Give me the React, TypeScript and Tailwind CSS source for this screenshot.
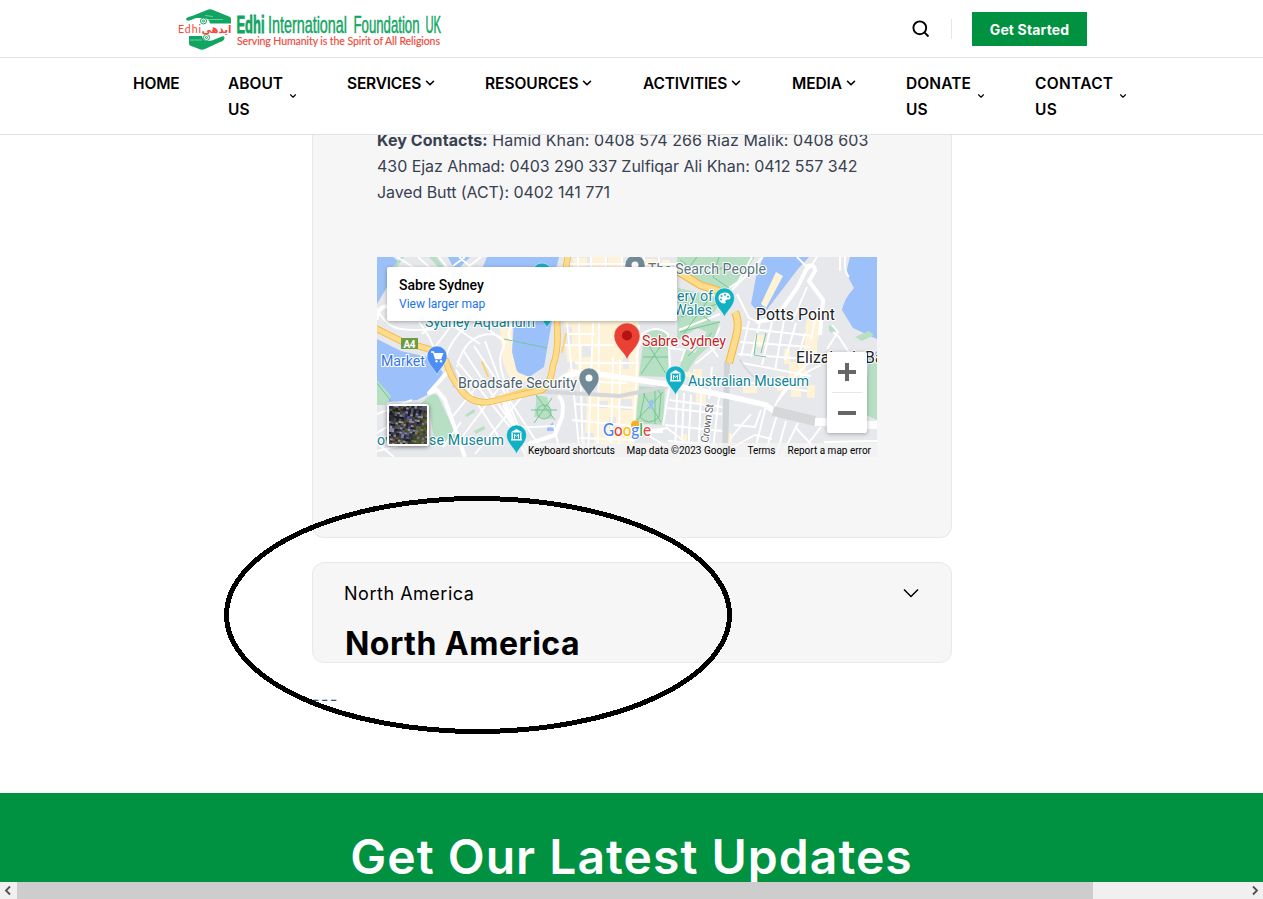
import { ChevronDown } from "lucide-react";

const navItems = [
  { label: "HOME", width: "w-[95px]", track: "tracking-[-0.15px]", menu: false },
  { label: "ABOUT US", width: "w-[119px]", track: "tracking-[0px]", menu: true, wrap: true, text: "w-[58px]" },
  { label: "SERVICES", width: "w-[138px]", track: "tracking-[-0.2px]", menu: true },
  { label: "RESOURCES", width: "w-[158px]", track: "tracking-[-0.05px]", menu: true },
  { label: "ACTIVITIES", width: "w-[149px]", track: "tracking-[-0.2px]", menu: true },
  { label: "MEDIA", width: "w-[114px]", track: "tracking-[-0.1px]", menu: true },
  { label: "DONATE US", width: "w-[129px]", track: "tracking-[0.1px]", menu: true, wrap: true, text: "w-[68px]" },
  { label: "CONTACT US", width: "w-[100px]", track: "tracking-[0.3px]", menu: true, wrap: true, text: "w-[81px]" },
];

function Logo() {
  return (
    <svg width="266" height="44" viewBox="0 0 266 44" className="block">
      <g fill="#12a562">
        <path d="M8 11.500 Q10 9.500 14 9 L29 3 Q32 1.500 35 3 L51 9.500 Q53 10 53 12 V16.500 H32 Q31 11 25.500 11 H18 L13 13 Q8 15 8 11.500 Z" />
        <path d="M11 29 H24 Q25 34 29 34 L34 33.500 L44 29.500 Q47 28.500 46.500 31 Q46 34 42 35 L27 42 Q24 43.500 21 42 L12 38.500 Q11 38 11 36 Z" />
      </g>
      <g fill="none" stroke="#12a562" strokeWidth="1">
        <circle cx="25.500" cy="14" r="3" /><circle cx="25.500" cy="14" r="1" />
        <circle cx="28.500" cy="30.500" r="3" /><circle cx="28.500" cy="30.500" r="1" />
      </g>
      <g fill="none" stroke="#9bdcbd" strokeWidth=".7"><path d="M30 12.500 H45 M27 8.500 L35 9.500 M12 33 H24" /></g>
      <text x="0" y="26" fontSize="10.5" fill="#f0493a" textLength="23" fontFamily="Lato, sans-serif">Edhi</text>
      <text x="23.500" y="25.500" fontSize="11" fontWeight="700" fill="#f0493a" textLength="30" lengthAdjust="spacingAndGlyphs" fontFamily="'DejaVu Sans', sans-serif">ایدھی</text>
      <g transform="translate(58.500 26) scale(.5 1)" fill="#12a562" fontFamily="'Liberation Sans Narrow', 'Liberation Sans', sans-serif">
        <text x="0" y="0" fontSize="23" fontWeight="700" textLength="56" lengthAdjust="spacingAndGlyphs" stroke="#12a562" strokeWidth=".8">Edhi</text>
        <text x="63" y="0" fontSize="23" textLength="158" lengthAdjust="spacingAndGlyphs" stroke="#12a562" strokeWidth=".5">International</text>
        <text x="234" y="0" fontSize="23" textLength="132" lengthAdjust="spacingAndGlyphs" stroke="#12a562" strokeWidth=".5">Foundation</text>
        <text x="378" y="0" fontSize="23" textLength="31" lengthAdjust="spacingAndGlyphs" stroke="#12a562" strokeWidth=".5">UK</text>
      </g>
      <text x="59" y="37.500" fontSize="10.6" fill="#f0493a" stroke="#f0493a" strokeWidth=".15" textLength="203" fontFamily="Lato, sans-serif">Serving Humanity is the Spirit of All Religions</text>
    </svg>
  );
}

function Pin({ x, y, color, r = 10, tip = 19 }: { x: number; y: number; color: string; r?: number; tip?: number }) {
  return (
    <path
      transform={`translate(${x} ${y})`}
      d={`M0 ${tip} C-2 ${r + 3} ${-r} ${r * 0.8} ${-r} 0 A${r} ${r} 0 0 1 ${r} 0 C${r} ${r * 0.8} 2 ${r + 3} 0 ${tip} Z`}
      fill={color}
      stroke="#fff"
      strokeOpacity=".55"
      strokeWidth=".8"
    />
  );
}

function Museum({ x, y }: { x: number; y: number }) {
  return (
    <g transform={`translate(${x} ${y})`}>
      <path d="M-6 -2.500 L0 -6 L6 -2.500 Z M-5.500 4 H5.500 V5.500 H-5.500 Z M-5 -2 H-3.500 V5 H-5 Z M3.500 -2 H5 V5 H3.500 Z" fill="#fff" />
      <path d="M-2 3.500 V-.8 L0 1.500 L2 -.8 V3.500" stroke="#fff" strokeWidth="1" fill="none" />
    </g>
  );
}

const shades = ["#1b1930", "#3d3b5e", "#5c5a7b", "#1c2220", "#46482f", "#8784a0", "#2a2f5a", "#5b5f3c", "#9b9595", "#30291f"];
const tiles = Array.from({ length: 500 }, (_, i) => {
  const noise = Math.abs(Math.sin(i * 12.9898 + 4.1) * 43758.5453) % 1;
  return { x: (i % 20) * 2, y: Math.floor(i / 20) * 1.6, c: shades[Math.floor(noise * 10)] };
});

const gaps = [
  [205, 88, 10, 12], [185, 105, 15, 7], [216, 124, 6, 12], [196, 147, 9, 18], [232, 160, 7, 12], [243, 142, 12, 11], [221, 144, 10, 7], [208, 176, 9, 11], [246, 100, 6, 12], [185, 70, 10, 18],
];

const blocks = [
  [196, 1, 14, 9], [213, 0, 15, 10], [231, 0, 14, 10], [268, 2, 12, 8], [284, 3, 9, 7], [306, 115, 9, 5], [316, 112, 9, 8],
  [319, 134, 10, 12], [331, 121, 12, 8], [366, 129, 14, 7], [380, 78, 7, 12], [400, 119, 7, 15], [412, 105, 9, 15], [432, 72, 8, 24],
  [421, 98, 8, 21], [407, 92, 6, 15], [414, 126, 10, 14], [430, 128, 8, 13], [371, 187, 11, 9], [304, 177, 6, 9], [268, 188, 10, 8], [347, 176, 8, 10],
];

const streets = [
  "M0 52 Q9 70 24 72 T60 72", "M42 65 Q53 79 58 94", "M56 66 L45 77 M77 65 L58 90 M92 66 Q73 84 69 100",
  "M75 68 L103 87 M80 110 Q88 78 113 77 Q128 78 127 90 Q119 102 128 125 L133 143", "M106 68 L129 86 M139 66 Q126 76 136 85",
  "M80 104 L157 200 M86 93 L145 183 M97 89 L163 190 M108 84 Q121 120 146 181", "M79 113 L125 185",
  "M85 180 L125 127 M98 197 L147 137 M75 160 L107 121 M66 190 L84 165", "M126 148 L149 200 M135 171 L177 169 L184 200",
  "M192 116 Q220 111 253 123", "M190 66 L203 200 M202 66 L206 200 M216 66 L211 200 M222 66 L221 187 M236 100 L234 187 M243 103 L242 187 M262 68 L256 185",
  "M185 88 H238 M198 106 H262 M188 124 L250 126 M198 147 L258 151 M195 163 L257 169 M203 181 L258 183",
  "M201 0 V10 M214 0 V10 M229 0 V10 M245 0 V10 M267 0 V10 M282 0 V10 M190 7 H302", "M190 77 H218",
  "M259 102 L265 77 Q279 67 291 77 L294 120 L286 168 M293 91 L308 93 L304 104", "M300 136 L298 200 M307 136 L305 180 M314 138 L311 200 M325 120 L321 200 M335 110 L332 142 M342 140 L335 200",
  "M290 151 L345 157 M288 168 L345 174 M292 143 L345 150 M318 107 L338 91 M291 184 L340 188", "M302 73 L320 66 L343 57 M343 70 L334 90 L341 100",
  "M386 0 L365 23 L355 33 M375 0 L361 25 L350 32 M360 37 L372 61 L381 65 L398 62", "M372 64 L364 99 M383 66 L374 100 M395 65 L385 108 M407 63 L398 113 M419 66 L408 103 M428 76 L421 101",
  "M365 71 L436 79 M363 85 L434 90 M361 97 L430 102", "M456 75 L462 80 L471 94 M440 52 L434 83 M430 30 L415 65", "M420 0 L432 12 L440 0 M463 0 L463 14 M468 0 Q467 15 472 20",
  "M365 106 L434 119 M362 124 L430 134", "M397 151 Q408 126 436 102 M400 145 Q419 118 444 108 M389 149 L376 200 M401 155 L387 200",
  "M353 182 L374 157 M357 168 L378 170 L384 153 M356 190 L378 178 L395 182 M409 164 L399 200", "M419 171 L446 200 M444 170 L421 200 M447 185 L500 184 M462 192 L480 200 M404 200 L421 166",
  "M261 175 L290 171 L312 188 M270 178 Q292 190 305 200 M224 170 L235 187", "M455 68 L461 75 L450 92", "M20 0 L36 10 M62 0 L70 10 M82 0 L94 10 M104 0 L91 10 M41 0 L52 10 M76 9 L88 0",
  "M0 157 L35 143 M0 176 L10 170 M0 186 L17 200 M0 194 L26 188",
];

const freeway = "M-2 71 L30 87 Q59 91 69 104 Q73 120 84 133 Q94 147 112 145 L165 133 Q174 127 176 108 Q182 94 180 66 L191 -2";

function MapArt() {
  return (
    <svg width="500" height="200" viewBox="0 0 500 200" className="block" fontFamily="Roboto, sans-serif">
      <rect width="500" height="200" fill="#e6e8ec" />
      <g fill="#9cc0f9">
        <path d="M0 0 H16 L22 5 L14 14 L10 30 L0 47 Z" />
        <path d="M71 0 H93 L83 10 H76 Z M110 0 H182 L179 12 H105 Z" />
        <path d="M0 82 L24 94 L50 100 L66 115 L56 135 L40 143 L10 145 L0 125 Z" />
        <path d="M137 64 H175 L167 110 L155 118 L146 124 L138 110 L135 96 Z" />
        <path d="M386 0 H432 L421 12 L385 59 L374 47 L379 20 Z" />
        <path d="M473 0 H500 V82 L491 78 L476 71 L465 53 Q467 42 477 31 L469 16 Z" />
        <path d="M170 171 l6 -6 l1 9 l-7 0 Z M491 102 L500 94 V125 L495 131 Z" />
      </g>
      <g fill="#b7dfc4">
        <path d="M52 0 H59 L67 10 H61 Z M14 12 L24 0 H27 L20 10 Z M0 123 L14 139 L9 148 H0 Z" />
        <path d="M300 0 H378 L364 20 L350 35 L333 31 L300 19 Z M301 31 L336 39 L340 51 L331 64 L300 84 Z" />
        <path d="M302 64 H343 L336 86 L320 100 L308 118 L302 113 L308 92 L318 96 L330 75 Z" />
        <path d="M267 79 Q277 68 291 77 L291 120 L262 119 Z M262 129 L288 131 L286 168 L257 166 Z" />
        <path d="M43 148 Q57 131 62 141 L81 182 L76 187 L57 181 L51 148 Z" />
        <path d="M159 138 L170 140 L176 162 L157 160 L159 147 Z M88 158 l9 -6 1 3 -8 5 Z M97 174 l10 -5 1 3 -9 5 Z" />
        <path d="M491 110 L500 97 V163 L487 157 Z M478 80 l14 -6 5 4 -12 6 Z M452 68 l7 4 -2 5 -5 -3 Z" />
      </g>
      <g fill="#fef3d6">
        <path d="M399 15 L406 19 L389 51 L384 47 Z M123 71 L135 65 V95 L140 115 L155 121 L137 130 L126 106 Z" />
        <path d="M187 64 H262 V125 L257 187 H207 L211 130 L191 116 Z M429 66 L436 53 L445 66 L438 94 L427 98 Z" />
        {blocks.map(([x, y, w, h], i) => <rect key={i} x={x} y={y} width={w} height={h} />)}
      </g>
      <g fill="#e6e8ec">
        {gaps.map(([x, y, w, h], i) => <rect key={i} x={x} y={y} width={w} height={h} />)}
      </g>
      <g fill="none" stroke="#fff" strokeWidth="1.900" strokeLinejoin="round">
        {streets.map((d) => <path key={d} d={d} />)}
      </g>
      <g fill="none" stroke="#fff" strokeWidth="4" strokeLinejoin="round">
        <path d="M379 65 L398 62 L420 31 L431 9 Q438 7 438 14 L432 24 L446 43 L443 78 M74 111 L52 136 L60 133 L68 143 L88 200" />
        <path d="M124 137 L140 175 M181 139 Q188 143 185 160 L178 178 L151 187 M0 63 Q-1 51 10 49 M261 174 H286" />
      </g>
      <g fill="none" stroke="#79c591" strokeWidth="1">
        <path d="M303 3 L323 18 M320 0 L306 18 M342 0 L336 20 L352 31 M355 6 L330 18 M304 42 L333 64 M332 42 L305 79 M304 60 L340 47 M303 75 L343 65" />
        <path d="M311 99 L335 76 M268 82 L289 117 M290 80 L264 117 M266 100 H291 M264 133 L284 165 M286 135 L260 163 M278 131 V167 M268 135 Q278 127 284 137 L282 160 Q272 170 263 160 Z" />
        <circle cx="167" cy="155" r="7" /><path d="M159 138 L178 163 M175 141 L157 166 M154 153 H180 M0 126 L14 144 M127 82 L170 91 M380 76 L377 98 L389 100 M389 76 L384 96" />
      </g>
      <path d="M272 144 l4 -2 0 9 -4 1 Z" fill="#9cc0f9" />
      <g fill="none" strokeLinecap="round">
        <path d="M350 105 L348 200" stroke="#d1d4d7" strokeWidth="6" strokeLinecap="butt" />
        <path d="M363 103 Q373 120 385 125 M72 105 Q83 120 76 130" stroke="#d4d7da" strokeWidth="1.500" />
        <path d="M150 134 L194 136 L243 139 L292 129" stroke="#d5d7da" strokeWidth="4" strokeLinecap="butt" />
        <path d={freeway} stroke="#f4b73f" strokeWidth="6.500" />
        <path d={freeway} stroke="#fddc8c" strokeWidth="5" />
        <path d="M297 12 L323 28 L342 34 M358 55 Q363 65 359 80 L352 106" stroke="#f4b73f" strokeWidth="8" strokeLinecap="butt" />
        <path d="M297 12 L323 28 L342 34 M358 55 Q363 65 359 80 L352 106" stroke="#fddc8c" strokeWidth="6" strokeLinecap="butt" />
        <path d="M118 141 L190 120 M105 105 L111 119 M189 77 L185 95" stroke="#fbd174" strokeWidth="2" />
        <path d="M181 126 Q190 112 220 117 L289 127 L350 139 L389 148 L398 155" stroke="#fff" strokeWidth="5.500" />
        <path d="M396 154 L438 164" stroke="#d6d7d9" strokeWidth="10" strokeLinecap="butt" />
        <path d="M438 165 H453 M485 168 H500" stroke="#fff" strokeWidth="8" strokeLinecap="butt" />
      </g>

      <Pin x={165} y={16} color="#12b0c4" />
      <Pin x={170} y={52} color="#12b0c4" />
      <Pin x={258} y={8} color="#718a98" />
      <circle cx="258" cy="8" r="3.500" fill="#fff" />
      <Pin x={212} y={121} color="#718a98" />
      <circle cx="212" cy="121" r="3.500" fill="#fff" />
      <Pin x={60} y={99} color="#4c8df6" />
      <path d="M54 95 H56.500 L58.500 101.500 H64.500" fill="none" stroke="#fff" strokeWidth="1.300" /><path d="M57 96 H66.500 L64.500 101 H58.500 Z" fill="#fff" />
      <circle cx="59.500" cy="104.300" r="1.200" fill="#fff" /><circle cx="64" cy="104.300" r="1.200" fill="#fff" />
      <Pin x={347.500} y={41} color="#12b0c4" />
      <path d="M347.500 35.500 a6 5.500 0 1 0 0 11 q2 -.5 1 -2 q-.5 -2 2 -2 q3 0 3 -2 q0 -5 -6 -5 Z" fill="#fff" />
      <g fill="#12b0c4"><circle cx="344.500" cy="39" r="1" /><circle cx="348" cy="37.800" r="1" /><circle cx="351" cy="39.800" r="1" /><circle cx="344" cy="42.500" r="1" /></g>
      <Pin x={298.500} y={119} color="#12b0c4" /><Museum x={298.500} y={119} />
      <Pin x={139.500} y={178} color="#12b0c4" /><Museum x={139.500} y={178} />
      <Pin x={250} y={79} color="#e94235" r={13} tip={24} />
      <circle cx="250" cy="78.500" r="5" fill="#b31412" />
      <circle cx="258.500" cy="168" r="4.500" fill="#f6b117" />

      <g fontSize="14.200" fontWeight="400" stroke="#fff" strokeWidth="2.200" strokeLinejoin="round" paintOrder="stroke">
        <text x="271" y="17" fill="#5c7480" textLength="118">The Search People</text>
        <text x="48" y="70" fill="#0f8494" textLength="110">Sydney Aquarium</text>
        <text x="300" y="44" fill="#0f8494" textLength="36">ery of</text>
        <text x="297" y="58" fill="#0f8494" textLength="38">Wales</text>
        <text x="265" y="89" fill="#c5221f" textLength="84">Sabre Sydney</text>
        <text x="4" y="109" fill="#3477e0" textLength="44">Market</text>
        <text x="81" y="131" fill="#4c616d" textLength="119">Broadsafe Security</text>
        <text x="311" y="129" fill="#0f8494" textLength="121">Australian Museum</text>
        <text x="0" y="188" fill="#0f8494" textLength="127">ow rhouse Museum</text>
        <text x="379" y="63" fontSize="15.800" fill="#202124" textLength="79">Potts Point</text>
        <text x="419" y="106" fontSize="15.800" fill="#202124" textLength="95">Elizabeth Bay</text>
        <text transform="translate(331 186) rotate(-82)" fontSize="10.800" fill="#5f6368" textLength="39">Crown St</text>
      </g>
      <rect x="24" y="81" width="17" height="11" fill="#6c9c43" />
      <text x="26.500" y="90.500" fontSize="10" fontWeight="700" fill="#fff" textLength="12">A4</text>
      <g fontFamily="Lato, sans-serif" fontSize="17.500" fontWeight="500" stroke="#fff" strokeWidth="2" paintOrder="stroke">
        <text x="226" y="178.500" textLength="48" lengthAdjust="spacingAndGlyphs">
          <tspan fill="#4285f4">G</tspan><tspan fill="#ea4335">o</tspan><tspan fill="#fbbc04">o</tspan><tspan fill="#4285f4">g</tspan><tspan fill="#34a853">l</tspan><tspan fill="#ea4335">e</tspan>
        </text>
      </g>
      <rect x="147" y="186" width="353" height="14" fill="#f5f5f5" fillOpacity=".75" />
      <g fontSize="10" fill="#000">
        <text x="151" y="197" textLength="87">Keyboard shortcuts</text>
        <text x="249.500" y="197" textLength="109">Map data ©2023 Google</text>
        <text x="370.500" y="197" textLength="28">Terms</text>
        <text x="410.500" y="197" textLength="83.500">Report a map error</text>
      </g>
    </svg>
  );
}

function SatelliteThumb() {
  return (
    <svg width="38" height="38" viewBox="0 0 38 38" className="block">
      <rect width="38" height="38" fill="#333142" />
      <g transform="rotate(10 19 19) scale(1.300) translate(-5 -5)">
        {tiles.map((t, i) => <rect key={i} x={t.x} y={t.y} width="2.100" height="1.700" fill={t.c} />)}
      </g>
      <path d="M21 38 L28 20 L33 17 L38 0 V38 Z" fill="#5f6527" opacity=".45" />
    </svg>
  );
}

function MapCard() {
  return (
    <div className="relative h-[200px] w-[500px] overflow-hidden font-[Roboto,sans-serif]">
      <MapArt />
      <div className="absolute left-[10px] top-[10px] h-[54px] w-[290px] rounded-[2px] bg-white px-3 pt-[10px] shadow-[0_1px_4px_rgba(0,0,0,0.3)]">
        <div className="text-[14px] font-medium leading-4 text-black">Sabre Sydney</div>
        <div className="mt-[4px] text-[12px] leading-[14px] text-[#1a73e8]">View larger map</div>
      </div>
      <div className="absolute left-[10px] top-[147px] h-[42px] w-[42px] overflow-hidden rounded-[3px] border-2 border-white shadow-[0_1px_4px_rgba(0,0,0,0.5)]">
        <SatelliteThumb />
      </div>
      <div className="absolute left-[450px] top-[95px] flex h-[81px] w-[40px] flex-col items-center rounded-[2px] bg-white shadow-[0_1px_4px_rgba(0,0,0,0.3)]">
        <svg width="40" height="81" viewBox="0 0 40 81">
          <path d="M11 20 H29 M20 11 V29 M11 61 H29" stroke="#666" strokeWidth="4" />
          <path d="M5 40.500 H35" stroke="#e6e6e6" />
        </svg>
      </div>
    </div>
  );
}

export default function App() {
  return (
    <div className="relative flex h-[899px] w-full flex-col overflow-hidden bg-white font-[Inter,sans-serif]">
      <header className="flex h-[58px] shrink-0 items-start border-b border-[#e5e5e5] pl-[178px]">
        <div className="mt-[7px] w-[734px]"><Logo /></div>
        <svg width="18" height="18" viewBox="0 0 18 18" className="mt-[20px] block shrink-0">
          <path d="M12.200 12.200 L16.500 16.500 M14.200 7.800 A6.400 6.400 0 1 1 1.400 7.800 A6.400 6.400 0 0 1 14.200 7.800 Z" stroke="#000" strokeWidth="1.900" fill="none" />
        </svg>
        <div className="ml-[21px] mt-[19px] h-5 w-px bg-[#e3e5e8]" />
        <button className="ml-[20px] mt-3 h-[34px] w-[115px] whitespace-nowrap bg-[#009240] text-center text-[14px] font-bold tracking-[0.15px] text-white">Get Started</button>
      </header>

      <nav className="flex h-[77px] shrink-0 items-start border-b border-[#e2e3e5] pl-[133px] pt-[13px] text-[15.5px] font-semibold leading-[26px] text-black">
        {navItems.map((item) => (
          <a key={item.label} className={`flex shrink-0 items-center ${item.width} ${item.track}`}>
            <span className={item.wrap ? item.text : "whitespace-nowrap"}>{item.label}</span>
            {item.menu && (item.wrap
              ? <ChevronDown size={10} strokeWidth={2.6} className="ml-[2px] -mt-[2px] shrink-0" />
              : <ChevronDown size={14} strokeWidth={2.8} className="ml-[2px] -mt-[2px] shrink-0" />)}
          </a>
        ))}
      </nav>

      <main className="flex h-[658px] shrink-0 flex-col overflow-hidden pl-[312px]">
        <section className="-mt-[8px] h-[411px] w-[640px] shrink-0 rounded-b-xl border border-t-0 border-[#e8e8e8] bg-[#f6f6f6] pl-[64px]">
          <p className="whitespace-nowrap text-[16px] leading-[26px] text-[#374151]">
            <span className="block tracking-[0.07px]"><b className="font-bold">Key Contacts:</b> Hamid Khan: 0408 574 266 Riaz Malik: 0408 603</span>
            <span className="block tracking-[-0.04px]">430 Ejaz Ahmad: 0403 290 337 Zulfiqar Ali Khan: 0412 557 342</span>
            <span className="block tracking-[-0.08px]">Javed Butt (ACT): 0402 141 771</span>
          </p>
          <div className="mt-[52px]"><MapCard /></div>
        </section>
        <section className="mt-6 h-[101px] w-[640px] shrink-0 overflow-hidden rounded-xl border border-[#e8e8e8] bg-[#f6f6f6] pl-8 pr-8 text-black">
          <div className="mt-[16px] flex h-[28px] items-center justify-between">
            <span className="-ml-px text-[18px] tracking-[0.52px]">North America</span>
            <svg width="16" height="10" viewBox="0 0 16 10"><path d="M1 1.500 L8 8.500 L15 1.500" fill="none" stroke="#000" strokeWidth="1.500" /></svg>
          </div>
          <h2 className="mt-[17px] text-[32px] font-bold leading-[40px] tracking-[0.48px]">North America</h2>
        </section>
        <p className="mt-[23px] text-[16px] leading-[26px] tracking-[1.6px] text-[#3c4f7c]">---</p>
      </main>

      <section className="h-[89px] shrink-0 overflow-hidden bg-[#009240] pt-[34px] text-center">
        <h2 className="whitespace-nowrap text-[48px] font-semibold leading-[60px] tracking-[1.03px] text-white">Get Our Latest Updates</h2>
      </section>

      <div className="flex h-[17px] shrink-0 items-center justify-between bg-[#f0f0f0]">
        <svg width="17" height="17" viewBox="0 0 17 17"><path d="M10 4.500 L6 8.500 L10 12.500" fill="none" stroke="#505050" strokeWidth="1.800" /></svg>
        <div className="h-full w-[1076px] bg-[#cdcdcd]" />
        <div className="flex flex-1 justify-end">
          <svg width="17" height="17" viewBox="0 0 17 17"><path d="M7 4.500 L11 8.500 L7 12.500" fill="none" stroke="#505050" strokeWidth="1.800" /></svg>
        </div>
      </div>

      <svg width="508" height="238" viewBox="0 0 508 238" className="pointer-events-none absolute left-[224px] top-[496px]">
        <ellipse cx="254" cy="119" rx="251.500" ry="116.500" fill="none" stroke="#000" strokeWidth="5" shapeRendering="crispEdges" />
      </svg>
    </div>
  );
}
